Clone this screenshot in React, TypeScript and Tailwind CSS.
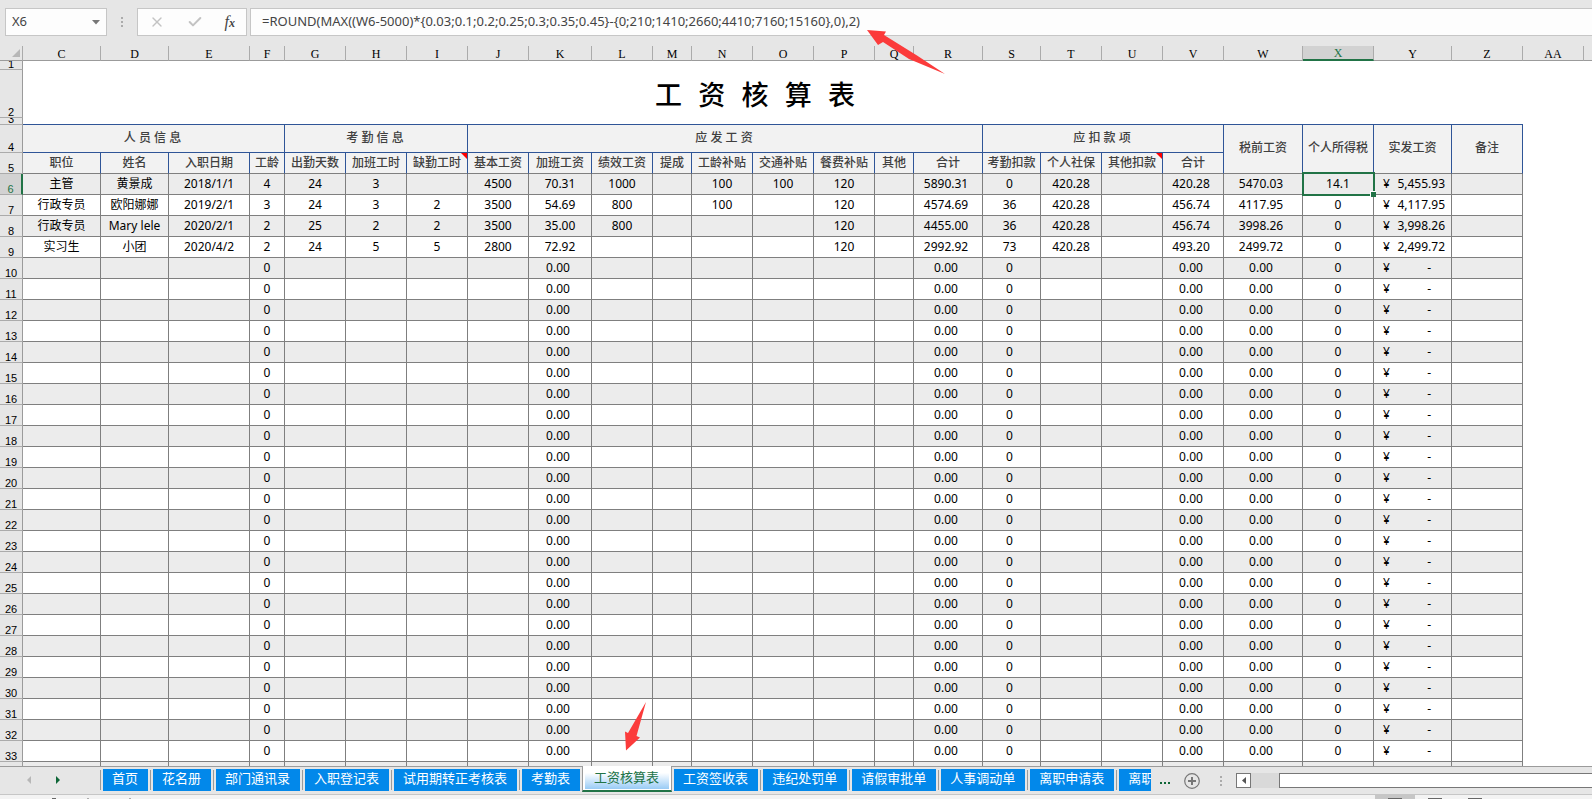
import React, { useState } from 'react'
import { Check, X } from 'lucide-react'

const columns = [
  { name: 'C', width: 'w-[78px]' },
  { name: 'D', width: 'w-[68px]' },
  { name: 'E', width: 'w-[81px]' },
  { name: 'F', width: 'w-[35px]' },
  { name: 'G', width: 'w-[61px]' },
  { name: 'H', width: 'w-[61px]' },
  { name: 'I', width: 'w-[61px]' },
  { name: 'J', width: 'w-[61px]' },
  { name: 'K', width: 'w-[63px]' },
  { name: 'L', width: 'w-[61px]' },
  { name: 'M', width: 'w-[39px]' },
  { name: 'N', width: 'w-[61px]' },
  { name: 'O', width: 'w-[61px]' },
  { name: 'P', width: 'w-[61px]' },
  { name: 'Q', width: 'w-[39px]' },
  { name: 'R', width: 'w-[69px]' },
  { name: 'S', width: 'w-[58px]' },
  { name: 'T', width: 'w-[61px]' },
  { name: 'U', width: 'w-[61px]' },
  { name: 'V', width: 'w-[61px]' },
  { name: 'W', width: 'w-[79px]' },
  { name: 'X', width: 'w-[71px]' },
  { name: 'Y', width: 'w-[78px]' },
  { name: 'Z', width: 'w-[71px]' },
  { name: 'AA', width: 'w-[61px]' },
]

const groups = [
  { label: '人 员 信 息', span: 4 },
  { label: '考 勤 信 息', span: 3 },
  { label: '应 发 工 资', span: 9 },
  { label: '应 扣 款 项', span: 4 },
]

const tallHeaders = ['税前工资', '个人所得税', '实发工资', '备注']

const headers = [
  '职位', '姓名', '入职日期', '工龄', '出勤天数', '加班工时', '缺勤工时', '基本工资', '加班工资', '绩效工资',
  '提成', '工龄补贴', '交通补贴', '餐费补贴', '其他', '合计', '考勤扣款', '个人社保', '其他扣款', '合计',
]

// Headers that carry a cell comment
const commented = ['缺勤工时', '其他扣款']

// Number formats that keep a blank after the figure
const padded = ['R', 'S', 'V', 'W']

// Values for columns C to Z
const staff = [
  ['主管', '黄景成', '2018/1/1', '4', '24', '3', '', '4500', '70.31', '1000', '', '100', '100', '120', '', '5890.31', '0', '420.28', '', '420.28', '5470.03', '14.1', '5,455.93', ''],
  ['行政专员', '欧阳娜娜', '2019/2/1', '3', '24', '3', '2', '3500', '54.69', '800', '', '100', '', '120', '', '4574.69', '36', '420.28', '', '456.74', '4117.95', '0', '4,117.95', ''],
  ['行政专员', 'Mary lele', '2020/2/1', '2', '25', '2', '2', '3500', '35.00', '800', '', '', '', '120', '', '4455.00', '36', '420.28', '', '456.74', '3998.26', '0', '3,998.26', ''],
  ['实习生', '小团', '2020/4/2', '2', '24', '5', '5', '2800', '72.92', '', '', '', '', '120', '', '2992.92', '73', '420.28', '', '493.20', '2499.72', '0', '2,499.72', ''],
]

const emptyRow = ['', '', '', '0', '', '', '', '', '0.00', '', '', '', '', '', '', '0.00', '0', '', '', '0.00', '0.00', '0', '-', '']

const rows = [...staff, ...Array.from({ length: 24 }, () => emptyRow)]

const sheets = [
  '首页', '花名册', '部门通讯录', '入职登记表', '试用期转正考核表', '考勤表', '工资核算表',
  '工资签收表', '违纪处罚单', '请假审批单', '人事调动单', '离职申请表', '离职交接表',
]

function RowLabel({ n, height = 'h-[20px]', selected = false }: { n: number; height?: string; selected?: boolean }) {
  return (
    <th
      scope="row"
      className={
        selected
          ? 'border-b border-r-2 border-b-[#ababab] border-r-[#217346] bg-[#d2d2d2] p-0 font-normal text-[#217346]'
          : 'border-b border-r border-b-[#ababab] border-r-[#9b9b9b] bg-[#e6e6e6] p-0 font-normal text-black'
      }
    >
      <div className={`flex items-end justify-center overflow-hidden font-['Liberation_Sans'] text-[11px] leading-[10px] ${height}`}>
        {n}
      </div>
    </th>
  )
}

function FormulaBar() {
  const [formula, setFormula] = useState('=ROUND(MAX((W6-5000)*{0.03;0.1;0.2;0.25;0.3;0.35;0.45}-{0;210;1410;2660;4410;7160;15160},0),2)')

  return (
    <div className="flex h-[46px] shrink-0 pt-2 pl-[5px] text-[#444]">
      <div className="flex h-7 w-[102px] items-center border border-[#c6c6c6] bg-[#fdfdfd]">
        <input aria-label="Name box" defaultValue="X6" className="w-full min-w-0 bg-transparent pl-1.5 text-[13px] outline-none" />
        <button aria-label="Cell names" className="px-1.5">
          <svg width="8" height="5" viewBox="0 0 8 5"><path d="M0 0h8L4 4.5z" fill="#777" /></svg>
        </button>
      </div>
      <div className="flex h-7 w-[30px] flex-col items-center justify-center gap-[2px]">
        {[0, 1, 2].map((i) => <span key={i} className="size-[2px] bg-[#ababab]" />)}
      </div>
      <div className="flex h-7 w-[110px] items-center justify-around border border-[#c6c6c6] bg-[#fdfdfd]">
        <button aria-label="Cancel"><X size={16} strokeWidth={2} color="#c3c3c3" /></button>
        <button aria-label="Enter"><Check size={16} strokeWidth={3} color="#c3c3c3" /></button>
        <button aria-label="Insert function" className="font-['Liberation_Serif'] text-[16px] leading-4 italic">
          f<span className="text-[12px] font-bold">x</span>
        </button>
      </div>
      <input
        aria-label="Formula"
        value={formula}
        onChange={(e) => setFormula(e.target.value)}
        className="ml-[3px] h-7 min-w-0 flex-1 border border-r-0 border-[#c6c6c6] bg-[#fdfdfd] pb-[2px] pl-[11px] text-[13px] outline-none"
      />
    </div>
  )
}

function ColumnLetters() {
  return (
    <tr className="h-[15px]">
      <th className="border-r border-b border-r-[#ababab] border-b-[#9b9b9b] p-0">
        <svg width="8" height="8" viewBox="0 0 8 8" className="ml-3"><path d="M8 0v8H0z" fill="#b7b7b7" /></svg>
      </th>
      {columns.map((col) => (
        <th
          key={col.name}
          scope="col"
          className={
            col.name === 'X'
              ? 'border-r border-b-2 border-r-[#ababab] border-b-[#217346] bg-[#d2d2d2] p-0 text-[#217346]'
              : 'border-r border-b border-r-[#ababab] border-b-[#9b9b9b] p-0 text-black'
          }
        >
          <div className="h-[13px] font-['Liberation_Serif'] text-[12px] leading-[15px] font-normal">{col.name}</div>
        </th>
      ))}
      <th className="border-b border-b-[#9b9b9b] p-0" />
    </tr>
  )
}

function DataRow({ index, values }: { index: number; values: string[] }) {
  const shaded = index % 2 === 0
  return (
    <tr className={shaded ? 'h-[21px] bg-[#ececec]' : 'h-[21px] bg-white'}>
      <RowLabel n={index} selected={index === 6} />
      {values.map((value, i) => {
        const name = columns[i].name
        const active = index === 6 && name === 'X'
        const trailing = padded.includes(name) || value === '0.00'
        return (
          <td
            key={name}
            className={`relative border-r border-b border-[#7f7f7f] p-0 text-center leading-5 whitespace-nowrap ${trailing ? 'pr-[4px]' : ''}`}
          >
            {name === 'Y' ? (
              <div className="flex justify-between pr-[6px] pl-[9px]">
                {value && <span>¥</span>}
                <span className={value === '-' ? 'pr-[14px]' : ''}>{value}</span>
              </div>
            ) : value}
            {active && (
              <div className="absolute -top-[2px] -right-[2px] -bottom-[2px] -left-px z-10 border-2 border-[#217346]">
                <span className="absolute -right-[3px] -bottom-[3px] size-[6px] border-t border-l border-white bg-[#217346]" />
              </div>
            )}
          </td>
        )
      })}
      <td colSpan={2} className="bg-white p-0" />
    </tr>
  )
}

function Sheet() {
  return (
    <main className="min-h-0 flex-1 overflow-hidden">
      <table className="w-full table-fixed border-separate border-spacing-0 text-[12px] text-black">
        <colgroup>
          <col className="w-[23px]" />
          {columns.map((col) => <col key={col.name} className={col.width} />)}
          <col />
        </colgroup>
        <thead>
          <ColumnLetters />
        </thead>
        <tbody>
          <tr className="h-[9px]">
            <RowLabel n={1} height="h-[8px]" />
            <td colSpan={26} className="bg-white p-0" />
          </tr>
          <tr className="h-[48px]">
            <RowLabel n={2} height="h-[47px]" />
            <td colSpan={24} className="bg-white p-0 pt-2 pr-9 text-center font-['Liberation_Mono','Noto_Sans_CJK_SC',monospace] text-[27px] leading-10 font-medium">
              工 资 核 算 表
            </td>
            <td colSpan={2} className="bg-white p-0" />
          </tr>
          <tr className="h-[7px]">
            <RowLabel n={3} height="h-[6px]" />
            <td colSpan={24} className="border-b border-[#2f5597] bg-white p-0" />
            <td colSpan={2} className="bg-white p-0" />
          </tr>
          <tr className="h-[28px] bg-[#f2f2f2] text-[#404040]">
            <RowLabel n={4} height="h-[27px]" />
            {groups.map((group) => (
              <th key={group.label} colSpan={group.span} className="border-r border-b border-[#2f5597] p-0 pr-[2px] pb-[2px] font-medium">
                {group.label}
              </th>
            ))}
            {tallHeaders.map((label) => (
              <th key={label} rowSpan={2} className="border-r border-b border-r-[#2f5597] border-b-[#7f7f7f] p-0 pb-[2px] font-medium">
                {label}
              </th>
            ))}
            <td colSpan={2} rowSpan={2} className="bg-white p-0" />
          </tr>
          <tr className="h-[21px] bg-[#f2f2f2] text-[#404040]">
            <RowLabel n={5} />
            {headers.map((label, i) => (
              <th key={columns[i].name} className="relative border-r border-b border-r-[#2f5597] border-b-[#7f7f7f] p-0 leading-5 font-medium whitespace-nowrap">
                {label}
                {commented.includes(label) && (
                  <svg width="6" height="6" viewBox="0 0 6 6" className="absolute top-0 right-0"><path d="M0 0h6v6z" fill="#f00" /></svg>
                )}
              </th>
            ))}
          </tr>
          {rows.map((values, i) => <DataRow key={i} index={i + 6} values={values} />)}
          <tr className="h-[21px] bg-[#ececec]">
            <th className="border-r border-r-[#9b9b9b] bg-[#e6e6e6] p-0" />
            {columns.slice(0, 24).map((col) => <td key={col.name} className="border-r border-[#7f7f7f] p-0" />)}
            <td colSpan={2} className="bg-white p-0" />
          </tr>
        </tbody>
      </table>
    </main>
  )
}

function SheetTabs() {
  const [current, setCurrent] = useState('工资核算表')

  return (
    <footer className="flex h-[29px] shrink-0 border-t border-b border-t-[#9b9b9b] border-b-[#c6c6c6]">
      <div className="flex w-[100px] shrink-0 items-center pb-[2px] pl-[27px]">
        <button aria-label="Previous sheets" className="w-[29px]">
          <svg width="4" height="8" viewBox="0 0 4 8"><path d="M4 0v8L0 4z" fill="#b7b7b7" /></svg>
        </button>
        <button aria-label="Next sheets">
          <svg width="4" height="8" viewBox="0 0 4 8"><path d="M0 0v8l4-4z" fill="#0e6637" /></svg>
        </button>
      </div>
      <div role="tablist" className="flex min-w-0 flex-1 gap-[2px] overflow-x-clip text-[13px] leading-[18px] whitespace-nowrap">
        {sheets.map((name, i) => {
          if (name === current) {
            return (
              <button key={name} role="tab" aria-selected className="-mt-px h-[26px] shrink-0 border-r border-b-2 border-l border-r-[#9b9b9b] border-b-[#217346] border-l-[#9b9b9b] bg-white px-[2px] pb-px text-[#217346]">
                <span className="block h-[23px] bg-linear-to-b from-white from-30% to-[#98cbf5] pt-[2px] pr-[10px] pl-[9px]">{name}</span>
              </button>
            )
          }
          return (
            <React.Fragment key={name}>
              {sheets[i - 1] !== current && <span className="mt-[3px] h-5 w-px shrink-0 bg-[#9b9b9b]" />}
              <button
                role="tab"
                aria-selected={false}
                onClick={() => setCurrent(name)}
                className="mt-[2px] h-[22px] shrink-0 bg-[#0288ea] pr-[10px] pb-[4px] pl-[9px] text-white"
              >
                {name}
              </button>
            </React.Fragment>
          )
        })}
      </div>
      <div className="flex w-[441px] shrink-0 items-center">
        <button aria-label="More sheets" className="ml-[9px] flex gap-[2px] pt-1">
          {[0, 1, 2].map((i) => <span key={i} className="size-[2px] bg-[#0e6637]" />)}
        </button>
        <button aria-label="New sheet" className="ml-[14px]">
          <svg width="16" height="16" viewBox="0 0 16 16" fill="none" stroke="#777">
            <circle cx="8" cy="8" r="7.3" strokeWidth="1.2" />
            <path d="M8 4v8M4 8h8" strokeWidth="2" />
          </svg>
        </button>
        <div className="ml-5 flex flex-col gap-[2px]">
          {[0, 1, 2].map((i) => <span key={i} className="size-[2px] bg-[#ababab]" />)}
        </div>
        <div className="ml-[14px] flex h-[15px] flex-1 bg-[#d9d9d9]">
          <button aria-label="Scroll left" className="flex w-[15px] items-center justify-center border border-[#777] bg-white">
            <svg width="4" height="7" viewBox="0 0 4 7"><path d="M4 0v7L0 3.5z" fill="#555" /></svg>
          </button>
          <div className="ml-7 flex-1 border border-r-0 border-[#777] bg-white" />
        </div>
      </div>
    </footer>
  )
}

function StatusBar() {
  return (
    <div className="flex h-1 shrink-0 justify-between overflow-hidden bg-[#f3f3f3]">
      <svg width="140" height="4" viewBox="0 0 140 4" className="shrink-0">
        <path d="M52 3.5h4M88 3v1M130 3v1" stroke="#666" strokeWidth="1" />
      </svg>
      <div className="flex w-[217px]">
        <div className="w-10 bg-[#c6c6c6] px-[13px] pt-[3px]"><div className="h-px bg-[#666]" /></div>
        <div className="w-10 px-[13px] pt-[3px]"><div className="h-px bg-[#666]" /></div>
        <div className="w-10 px-[13px] pt-[3px]"><div className="h-px bg-[#666]" /></div>
      </div>
    </div>
  )
}

export default function App() {
  return (
    <div className="relative flex h-screen flex-col overflow-hidden bg-[#e6e6e6] font-['Noto_Sans','Noto_Sans_CJK_SC',sans-serif]">
      <FormulaBar />
      <Sheet />
      <SheetTabs />
      <StatusBar />

      {/* Red pointers at the formula and at the open sheet */}
      <svg width="80" height="46" viewBox="0 0 80 46" className="pointer-events-none absolute top-[30px] left-[867px] z-20">
        <path d="M0 0l19 1.500-2 3.500L50 25.500 78 44 42 29 16 12l-5 3z" fill="#fb3b3b" />
      </svg>
      <svg width="22" height="49" viewBox="0 0 22 49" className="pointer-events-none absolute bottom-[48px] left-[625px] z-20">
        <path d="M21 0L11.500 34l3.500 1.500L1 48.500 0 29.500l3 1.500z" fill="#fb3b3b" />
      </svg>
    </div>
  )
}
